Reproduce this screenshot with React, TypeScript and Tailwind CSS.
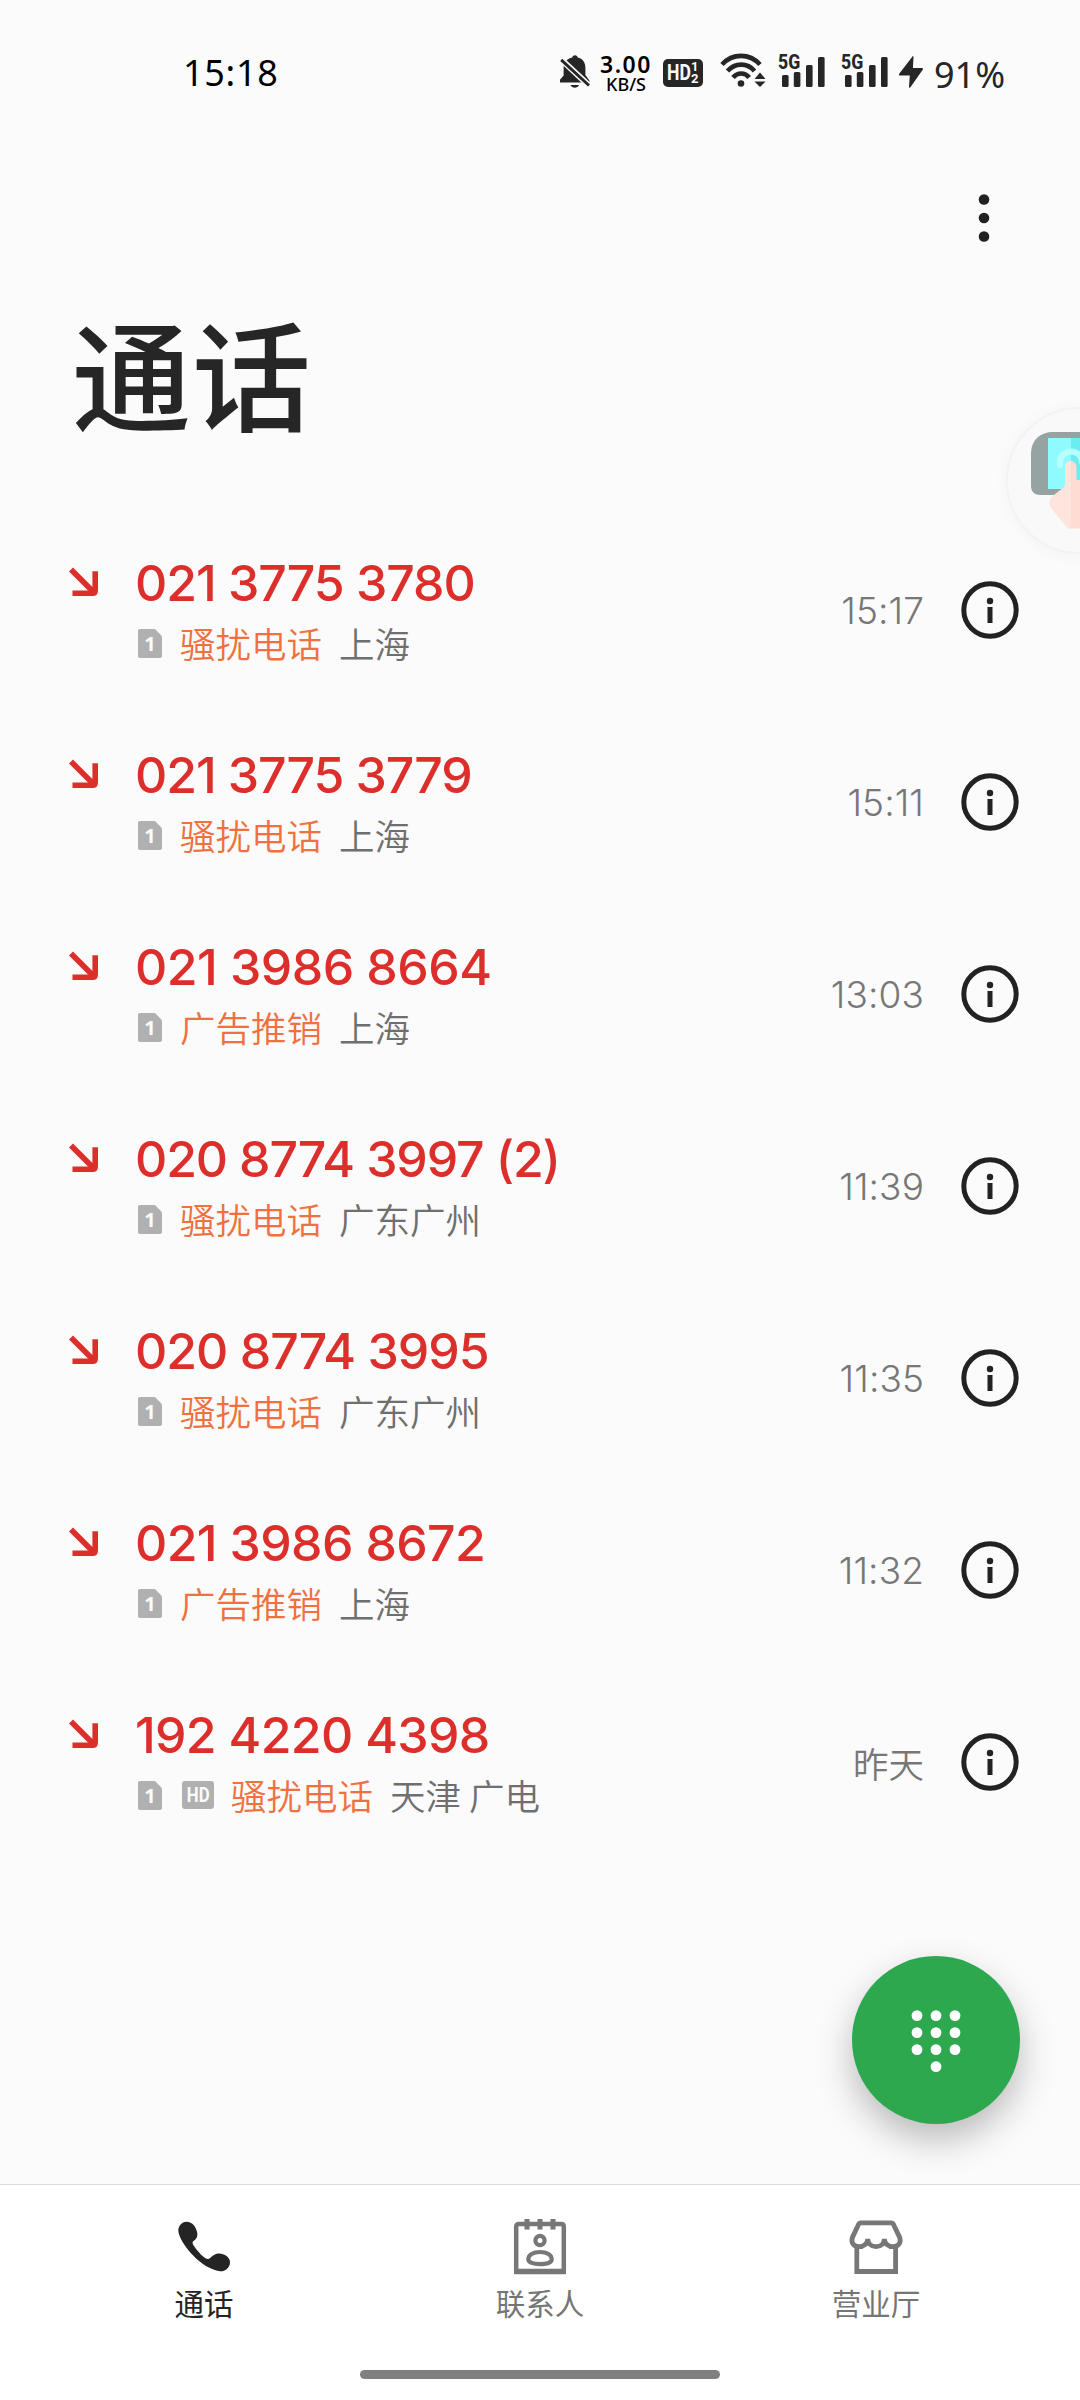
import React from "react";

type Call = {
  number: string;
  tracking: string;
  tag: string;
  place: string;
  time: string;
  timeClass: string;
  hd?: boolean;
};

const digits = "font-['Inter','Noto_Sans_CJK_SC',sans-serif]";
const clock = "mt-[72px] text-[37px] tracking-[0.1px]";

const calls: Call[] = [
  { number: "021 3775 3780", tracking: "tracking-[-1.05px]", tag: "骚扰电话", place: "上海", time: "15:17", timeClass: clock },
  { number: "021 3775 3779", tracking: "tracking-[-1.1px]", tag: "骚扰电话", place: "上海", time: "15:11", timeClass: clock },
  { number: "021 3986 8664", tracking: "tracking-[-0.55px]", tag: "广告推销", place: "上海", time: "13:03", timeClass: clock },
  { number: "020 8774 3997 (2)", tracking: "tracking-[-1.15px]", tag: "骚扰电话", place: "广东广州", time: "11:39", timeClass: clock },
  { number: "020 8774 3995", tracking: "tracking-[-1px]", tag: "骚扰电话", place: "广东广州", time: "11:35", timeClass: clock },
  { number: "021 3986 8672", tracking: "tracking-[-0.65px]", tag: "广告推销", place: "上海", time: "11:32", timeClass: clock },
  { number: "192 4220 4398", tracking: "tracking-[-0.7px]", tag: "骚扰电话", place: "天津 广电", time: "昨天", timeClass: "mt-[75px] text-[35.5px]", hd: true },
];

function BellOff() {
  return (
    <svg className="h-[34px] w-[32px] shrink-0" viewBox="0 0 32 34" fill="#262626">
      <path d="M16 1.200c1.700 0 2.400 1 2.700 2.200 5 1.200 7.700 5 7.700 10v7.600l4 5.400v2H1v-2.600l3.600-4.400V13.400c0-5 3.500-8.800 8.700-10 .3-1.200 1-2.200 2.700-2.200z" />
      <path d="M11.500 31h8.500c-.8 1.700-2.300 2.800-4.200 2.800s-3.500-1.100-4.300-2.800z" />
      <path d="M0 3.500L31.500 33" stroke="#fbfbfb" strokeWidth="6" fill="none" />
      <path d="M2.200 5.800L30 31.500" stroke="#262626" strokeWidth="3" fill="none" />
    </svg>
  );
}

function Wifi() {
  return (
    <svg className="h-[36px] w-[46px] shrink-0" viewBox="0 0 46 36" fill="none" stroke="#262626" strokeWidth="4.600">
      <path d="M2 11.500C12.500 0 29.500 0 40 11.500" />
      <path d="M7.500 18C15 9.500 27.500 9.500 34.500 18" />
      <path d="M13 24.500c4.500-5.300 12-5.300 16.200 0" />
      <circle cx="21" cy="30.500" r="3.300" fill="#262626" stroke="none" />
      <path d="M40 19.500l5.500 6.500h-11zM40 34l5.500-5.500h-11z" fill="#262626" stroke="none" />
    </svg>
  );
}

function Signal() {
  return (
    <div className="relative h-[36px] w-[48px] shrink-0">
      <svg className="h-[36px] w-[48px]" viewBox="0 0 48 36" fill="#262626">
        <rect x="4" y="22" width="6.600" height="12" rx="1.500" />
        <rect x="15.800" y="19" width="6.600" height="15" rx="1.500" />
        <rect x="28" y="12" width="6.600" height="22" rx="1.500" />
        <rect x="40" y="4" width="6.600" height="30" rx="1.500" />
      </svg>
      <span className="absolute left-0 top-[0px] origin-left scale-x-[.84] font-['Roboto',sans-serif] text-[21px] font-extrabold leading-[19px] text-[#262626]">5G</span>
    </div>
  );
}

function StatusBar() {
  return (
    <header className="flex h-[96px] items-start pt-[53px] text-[#262626]">
      <span className="ml-[183px] w-[376px] font-['Noto_Sans',sans-serif] text-[36px] font-[450] leading-[40px] tracking-[0.7px] text-black">15:18</span>
      <div className="mt-[1px]"><BellOff /></div>
      <div className="ml-[8px] flex w-[54px] flex-col items-center font-['Noto_Sans',sans-serif] font-semibold text-black">
        <span className="-mt-[1px] text-[23px] leading-[24px] tracking-[1.5px]">3.00</span>
        <span className="text-[18px] font-medium leading-[16px]">KB/S</span>
      </div>
      <div className="ml-[10px] mt-[6px] flex h-[28px] w-[40px] rounded-[5px] bg-[#262626] pl-[4px] font-['Roboto',sans-serif] font-bold text-[#fbfbfb]">
        <span className="w-[24px] origin-left scale-x-[.8] text-[22px] leading-[28px]">HD</span>
        <span className="flex flex-col pt-[2px] text-[13px] leading-[12px]"><span>1</span><span>2</span></span>
      </div>
      <div className="ml-[17px]"><Wifi /></div>
      <div className="ml-[12px]"><Signal /></div>
      <div className="ml-[15px]"><Signal /></div>
      <svg className="ml-[9px] mt-[2px] h-[34px] w-[26px]" viewBox="0 0 26 34" fill="#262626">
        <path d="M14.300 1.800c.3-1 1.200-.9 1.200.2l-.6 11h8.800c1.400 0 1.700.8 1 1.800L12.400 32.200c-.7 1-1.500.7-1.400-.4l.8-11.300H2c-1.200 0-1.400-.8-.8-1.700z" />
      </svg>
      <span className="ml-[10px] mt-[2px] font-['Noto_Sans',sans-serif] text-[36px] font-[450] leading-[40px]">91%</span>
    </header>
  );
}

function AssistBall() {
  return (
    <div className="absolute right-0 top-[388px] h-[184px] w-[92px] overflow-hidden">
      <div className="absolute left-[18px] top-[19px] size-[147px] overflow-hidden rounded-full border-2 border-[#f3f3f3] bg-[#f9f9f9] shadow-[0_2px_16px_rgba(0,0,0,0.035)]">
        <svg className="absolute left-[22px] top-[22px] h-[100px] w-[70px]" viewBox="0 0 70 100">
          <path d="M1 23C1 9 10 1 24 1h46v63H10c-5 0-9-3-9-9z" fill="#95a3a2" />
          <path d="M18 7h52v51H18z" fill="#8ffbff" />
          <path d="M41 7h29v51H41z" fill="#69edf0" />
          <path d="M30 34V31c0-6 5-10.500 11-10.500S52 25 52 31" fill="none" stroke="#b8ffff" strokeWidth="6" strokeLinecap="round" />
          <path d="M35 36c0-8 11.500-8 11.500 0v13H70v48.500H38L20.500 76c-2-4-.5-9 3-11.500L33 57c1.500-1 2-2 2-4z" fill="#ffdcd3" />
          <path d="M35 36c0-4 3-6 6-6v67.500h-3L20.500 76c-2-4-.5-9 3-11.500L33 57c1.500-1 2-2 2-4z" fill="#fde4dc" />
        </svg>
      </div>
    </div>
  );
}

function SimBadge() {
  return (
    <span className="relative flex h-[29px] w-[24px] items-center justify-center">
      <svg className="absolute inset-0 h-[29px] w-[24px]" viewBox="0 0 24 29" fill="#b0b0b0">
        <path d="M2 0h13.500c1.200 0 2 .4 2.800 1.200L22.800 6c.8.900 1.200 1.600 1.200 2.800V27c0 1.200-.8 2-2 2H2c-1.200 0-2-.8-2-2V2C0 .8.800 0 2 0z" />
      </svg>
      <span className="relative pt-[2px] font-['Noto_Sans',sans-serif] text-[20px] font-bold leading-[20px] text-[#fbfbfb]">1</span>
    </span>
  );
}

function CallRow({ call }: { call: Call }) {
  return (
    <li className="flex h-[192px] pl-[69px]">
      <svg className="mt-[53px] h-[30px] w-[30px]" viewBox="0 0 30 30" fill="none" stroke="#dc2f2b" strokeWidth="5.600">
        <path d="M2 2.500L25 25.500" />
        <path d="M3.500 26.200H23.500c2 0 2.700-.7 2.700-2.700V4.200" />
      </svg>
      <div className="ml-[36px] flex-1 pt-[39px]">
        <div className={`${digits} ${call.tracking} whitespace-nowrap text-[50px] font-medium leading-[60px] text-[#dc2f2b]`}>{call.number}</div>
        <div className="ml-[3px] flex h-[60px] items-center font-['Noto_Sans_CJK_SC',sans-serif] text-[35.500px] font-[350] leading-[60px]">
          <SimBadge />
          {call.hd && (
            <span className="ml-[20px] flex h-[28px] w-[32px] items-center justify-center rounded-[3px] bg-[#b0b0b0]">
              <span className="scale-x-[.8] font-['Roboto',sans-serif] text-[21px] font-bold leading-[28px] text-[#fbfbfb]">HD</span>
            </span>
          )}
          <span className={`${call.hd ? "ml-[17px]" : "ml-[18px]"} text-[#f07040]`}>{call.tag}</span>
          <span className="ml-[17px] text-[#6f6f6f]">{call.place}</span>
        </div>
      </div>
      <span className={`${digits} ${call.timeClass} font-[350] leading-[50px] text-[#777777]`}>{call.time}</span>
      <svg className="ml-[37px] mr-[61px] mt-[67px] h-[58px] w-[58px]" viewBox="0 0 58 58" fill="#222222">
        <circle cx="29" cy="29" r="26.200" fill="none" stroke="#222222" strokeWidth="5" />
        <circle cx="29" cy="20" r="3.200" />
        <rect x="26.500" y="26" width="5" height="16" />
      </svg>
    </li>
  );
}

function PhoneIcon() {
  return (
    <svg className="h-[58px] w-[58px]" viewBox="0 0 58 58" fill="#242424">
      <path d="M4.500 8C7.500 3 14.500 2 19 7.500c3 4 4.500 9.500 2.500 12.500-1.500 2.500-3.500 2.500-4 4.500-.6 2.300 11 16.500 15.500 16.500 2.500 0 3.500-3.500 8-5 6-2 14 2.500 14 8 0 5.500-4.500 9.800-10 9.300C26 50.500 7 27.500 3.800 15.500 3 12.500 3.200 10.200 4.500 8z" />
    </svg>
  );
}

function ContactsIcon() {
  return (
    <svg className="h-[58px] w-[58px]" viewBox="0 0 58 58" fill="none" stroke="#777777" strokeWidth="4.500">
      <path d="M5.200 54V8.500c0-1.600 1-2.500 2.500-2.500h42.600c1.500 0 2.500 1 2.500 2.500V54" />
      <path d="M3 53.500h52" strokeWidth="5.500" />
      <path d="M16 1v10.500M29 1v10.500M42 1v10.500" strokeWidth="5" />
      <circle cx="29" cy="22.500" r="4.600" strokeWidth="4.200" />
      <path d="M17.300 41.300C17.300 37 22 34 29 34s11.700 3 11.700 7.300c0 3-4.700 4.900-11.700 4.900s-11.700-1.900-11.700-4.900z" strokeWidth="4.200" />
    </svg>
  );
}

function StoreIcon() {
  return (
    <svg className="h-[58px] w-[58px]" viewBox="0 0 58 58" fill="none" stroke="#777777" strokeWidth="4.800">
      <path d="M9.800 28v25.500h38.800V28" />
      <path d="M14 4.800h30c1.300 0 2 .6 2.500 1.700l6.300 13.200c1.500 5.600-1.800 9-6.600 9-4.500 0-8.900-3-8.900-8 0 5-3.500 8-8.200 8s-8.300-3-8.300-8c0 5-4.400 8-8.900 8-4.800 0-8.100-3.400-6.600-9L11.500 6.500c.5-1.100 1.200-1.700 2.500-1.700z" />
    </svg>
  );
}

const dialDots = [
  [19, 19], [38, 19], [57, 19], [19, 36], [38, 36], [57, 36], [19, 53], [38, 53], [57, 53], [38, 70],
];

export default function App() {
  return (
    <div className="relative flex h-[2400px] w-[1080px] flex-col overflow-hidden bg-[#fbfbfb] font-['Noto_Sans_CJK_SC',sans-serif]">
      <StatusBar />
      <div className="flex h-[195px] justify-end pr-[86px] pt-[90px]">
        <svg className="h-[64px] w-[20px]" viewBox="0 0 20 64" fill="#222222">
          <circle cx="10" cy="13.500" r="5.300" />
          <circle cx="10" cy="32" r="5.300" />
          <circle cx="10" cy="50.500" r="5.300" />
        </svg>
      </div>
      <h1 className="h-[223px] pl-[72px] text-[119px] font-medium leading-[160px] tracking-[1px] text-[#262626]">通话</h1>
      <ul className="flex-1">
        {calls.map((c) => (
          <CallRow key={c.number} call={c} />
        ))}
      </ul>
      <AssistBall />
      <button className="absolute left-[852px] top-[1956px] flex size-[168px] items-center justify-center rounded-full bg-[#2da84f] shadow-[0_16px_36px_rgba(0,0,0,0.26)]">
        <svg className="h-[88px] w-[76px]" viewBox="0 0 76 88" fill="#ffffff">
          {dialDots.map(([x, y]) => (
            <circle key={`${x}-${y}`} cx={x} cy={y + 0.6} r="5.400" />
          ))}
        </svg>
      </button>
      <nav className="relative flex h-[216px] flex-col items-center border-t border-[#dcdcdc] bg-white">
        <div className="grid h-[185px] w-[1008px] grid-cols-3 pt-[33px] text-[29.500px] leading-[44px] text-[#757575]">
          <div className="flex flex-col items-center gap-[4px] text-[#242424]">
            <PhoneIcon />
            <span>通话</span>
          </div>
          <div className="flex flex-col items-center gap-[4px]">
            <ContactsIcon />
            <span>联系人</span>
          </div>
          <div className="flex flex-col items-center gap-[4px]">
            <StoreIcon />
            <span>营业厅</span>
          </div>
        </div>
        <div className="h-[9px] w-[360px] rounded-full bg-[#808080]" />
      </nav>
    </div>
  );
}
